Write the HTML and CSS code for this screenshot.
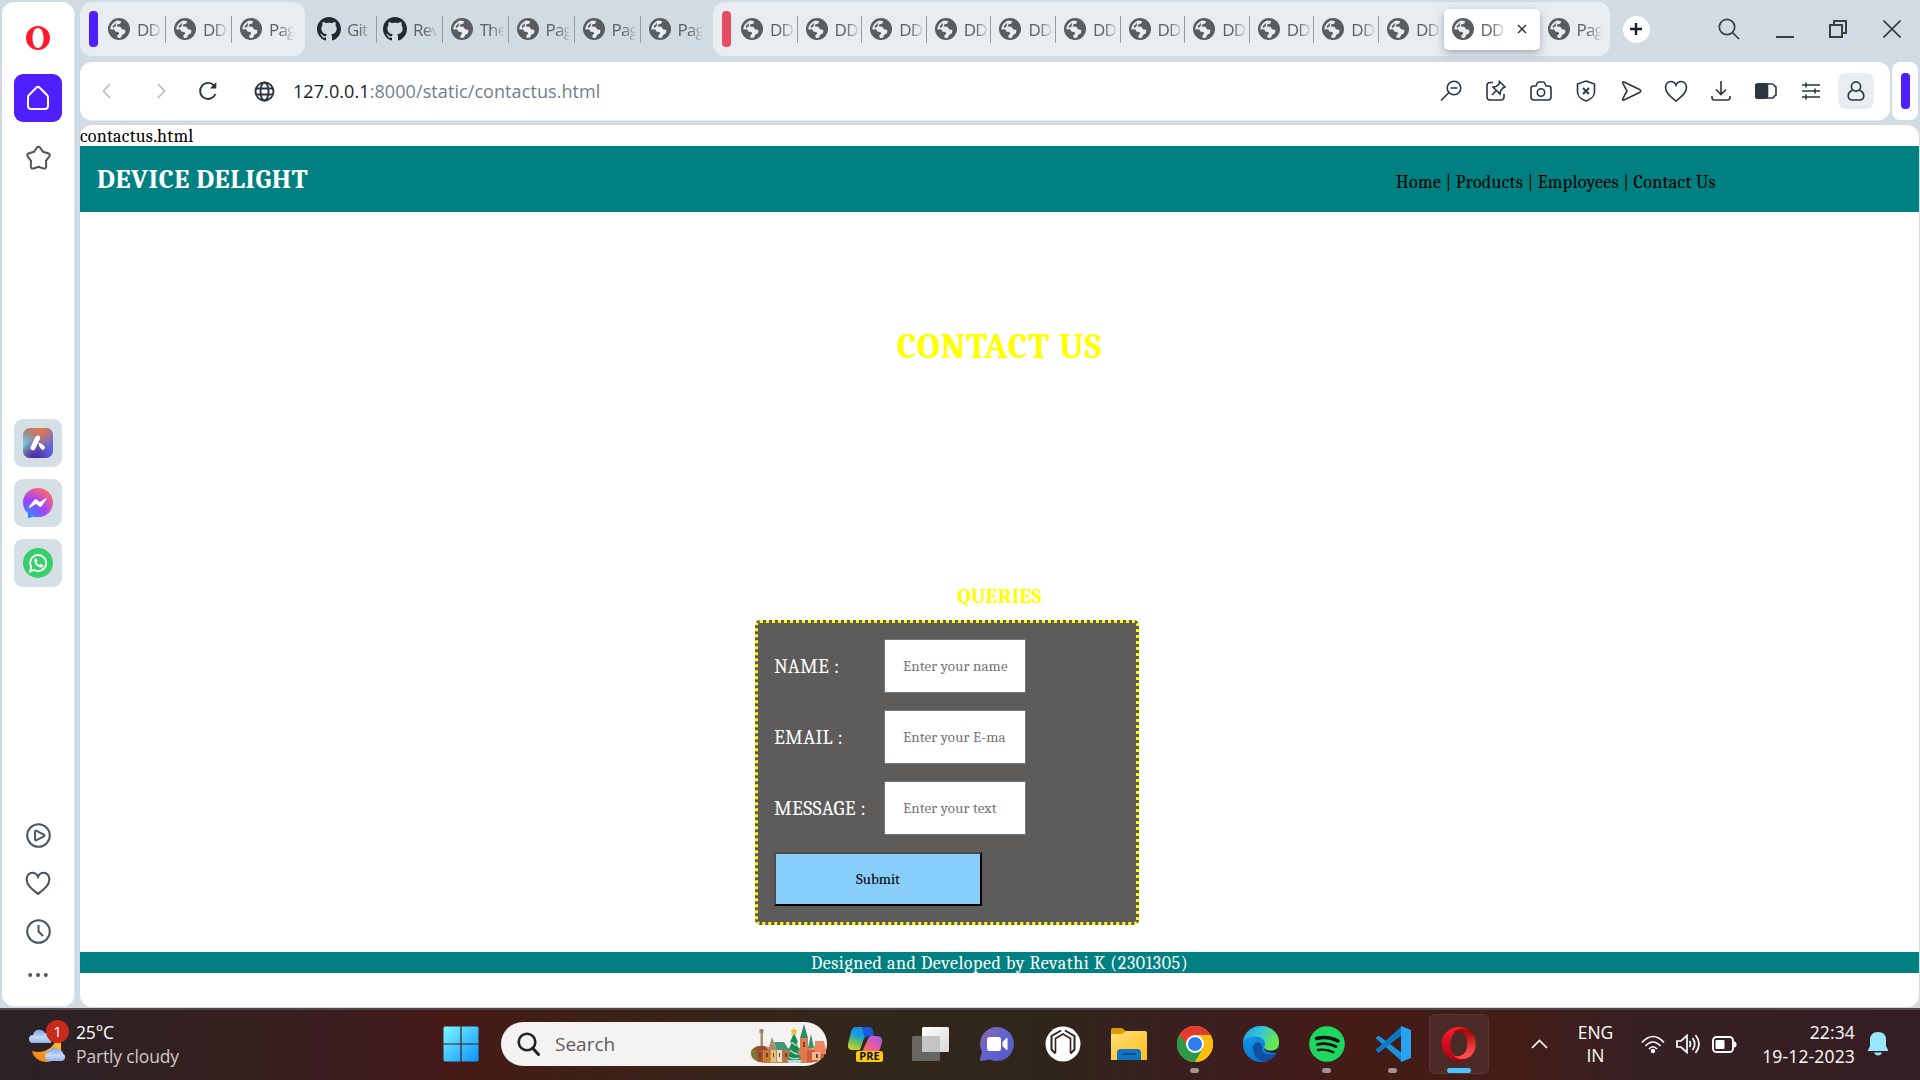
FILE: index.html
```html
<!DOCTYPE html>
<html lang="en">
<head>
<meta charset="utf-8">
<title>DD</title>
<link rel="stylesheet" href="styles.css">
</head>
<body>
<svg class="defs" width="0" height="0">
  <defs>
    <symbol id="earth" viewBox="0 0 22 22"><circle cx="11" cy="11" r="11" fill="#5a5c5e"/><path d="M2.300 11.500C2.500 7.500 5 4 9.500 2.600l3.700.6-1 2.600-2.800.4-.6 2.300 3.600.2 1.600 2.600 3.400.6-.4 3.300-2.700 1.600-1.400 3-3.100.2-.6-2.600 2-1.600-.8-1.700-2.700-.4-1.700-2.400z" fill="#e8edf1"/><path d="M4.600 8.200l3.600-3.500-.6 3.600-2.400 1.600z" fill="#5a5c5e"/></symbol>
    <symbol id="github" viewBox="0 0 16 16"><path fill="#24292f" d="M8 0C3.580 0 0 3.580 0 8c0 3.540 2.290 6.530 5.470 7.590.4.070.55-.17.55-.38 0-.19-.01-.82-.01-1.490-2.010.37-2.530-.49-2.690-.94-.09-.23-.48-.94-.82-1.130-.28-.15-.68-.52-.01-.53.63-.01 1.080.58 1.230.82.72 1.210 1.870.87 2.330.66.070-.52.28-.87.51-1.070-1.780-.2-3.640-.89-3.640-3.950 0-.87.31-1.590.82-2.150-.08-.2-.36-1.020.08-2.120 0 0 .67-.21 2.200.82.64-.18 1.320-.27 2-.27s1.360.09 2 .27c1.530-1.040 2.200-.82 2.200-.82.44 1.100.16 1.920.08 2.120.51.56.82 1.270.82 2.150 0 3.070-1.870 3.750-3.650 3.950.29.25.54.73.54 1.480 0 1.070-.01 1.930-.01 2.200 0 .21.15.46.55.38A8.010 8.010 0 0 0 16 8c0-4.420-3.580-8-8-8z"/></symbol>
    <symbol id="heart" viewBox="0 0 24 24"><path d="M12 22C7.500 18.500 1.500 14.500 1.500 8.500c0-3.300 2.300-6 5.300-6 2.300 0 4.200 1.300 5.200 3.700 1-2.400 2.900-3.700 5.200-3.700 3 0 5.300 2.700 5.300 6 0 6-6 10-10.500 13.500z"/></symbol>
    <linearGradient id="gWin" x1="0" y1="0" x2="1" y2="1"><stop offset="0" stop-color="#7df7ff"/><stop offset="1" stop-color="#0893ff"/></linearGradient>
    <linearGradient id="gAria" x1="0" y1="0" x2="1" y2="1"><stop offset="0" stop-color="#b47c70"/><stop offset=".35" stop-color="#8b7598"/><stop offset="1" stop-color="#5060ff"/></linearGradient>
    <radialGradient id="gAria2" cx=".6" cy="0" r=".6"><stop offset="0" stop-color="#e9794a"/><stop offset="1" stop-color="#e9794a" stop-opacity="0"/></radialGradient>
    <radialGradient id="gAria3" cx="0" cy=".55" r=".5"><stop offset="0" stop-color="#79d5e2"/><stop offset="1" stop-color="#79d5e2" stop-opacity="0"/></radialGradient>
    <radialGradient id="gAria4" cx=".4" cy="1" r=".6"><stop offset="0" stop-color="#46279b"/><stop offset="1" stop-color="#46279b" stop-opacity="0"/></radialGradient>
    <radialGradient id="gMsg" cx=".15" cy="1" r="1.100"><stop offset="0" stop-color="#1898ff"/><stop offset=".55" stop-color="#a040ff"/><stop offset="1" stop-color="#ff6870"/></radialGradient>
    <linearGradient id="gCop1" x1="0" y1="1" x2=".3" y2="0"><stop offset="0" stop-color="#f2d21c"/><stop offset=".4" stop-color="#6dc05a"/><stop offset=".7" stop-color="#189edb"/><stop offset="1" stop-color="#1b8fe6"/></linearGradient>
    <linearGradient id="gCop2" x1="1" y1="0" x2="0" y2="1"><stop offset="0" stop-color="#9a5cf0"/><stop offset=".55" stop-color="#e65aa0"/><stop offset="1" stop-color="#ff7845"/></linearGradient>
    <linearGradient id="gChat" x1="0" y1="0" x2="1" y2="1"><stop offset="0" stop-color="#9067a8"/><stop offset=".5" stop-color="#5f63cf"/><stop offset="1" stop-color="#5458c0"/></linearGradient>
    <linearGradient id="gFold" x1="0" y1="0" x2="1" y2="1"><stop offset="0" stop-color="#ffdf72"/><stop offset="1" stop-color="#ffbf25"/></linearGradient>
    <linearGradient id="gEdge1" x1="0" y1="0" x2="1" y2=".4"><stop offset="0" stop-color="#1b9de2"/><stop offset=".5" stop-color="#36c5d8"/><stop offset="1" stop-color="#66eb4c"/></linearGradient>
    <linearGradient id="gEdge2" x1="0" y1="0" x2=".4" y2="1"><stop offset="0" stop-color="#1ba0e6"/><stop offset="1" stop-color="#0874d4"/></linearGradient>
    <linearGradient id="gOp1" x1="0" y1="0" x2="0" y2="1"><stop offset="0" stop-color="#ff1b2d"/><stop offset="1" stop-color="#a70014"/></linearGradient>
    <linearGradient id="gOp2" x1="0" y1="0" x2="0" y2="1"><stop offset="0" stop-color="#9c0000"/><stop offset=".8" stop-color="#ff4b4b"/></linearGradient>
    <linearGradient id="gCloud" x1="0" y1="0" x2="0" y2="1"><stop offset="0" stop-color="#7da5e6"/><stop offset=".6" stop-color="#c5d9f8"/><stop offset="1" stop-color="#8fb0ea"/></linearGradient>
    <linearGradient id="gMoon" x1="0" y1="1" x2="1" y2="0"><stop offset="0" stop-color="#ee7a18"/><stop offset="1" stop-color="#ffc12e"/></linearGradient>
    <linearGradient id="gTv" x1="0" y1="0" x2="1" y2="1"><stop offset="0" stop-color="#fff"/><stop offset="1" stop-color="#d8d8d8"/></linearGradient>
  </defs>
</svg>

<div class="browser">
  <aside class="sidebar">
    <svg class="side-logo" viewBox="0 0 24 24"><path fill="#ff1b2d" fill-rule="evenodd" d="M12 0a12 12 0 1 0 0 24 12 12 0 1 0 0-24zM12 2c3.300 0 5.500 4 5.500 10s-2.200 10-5.500 10-5.500-4-5.500-10S8.700 2 12 2z"/></svg>
    <div class="side-home"><svg width="24" height="26" viewBox="0 0 24 26" fill="none" stroke="#fff" stroke-width="2" stroke-linejoin="round"><path d="M2 12.500q0-1.500 1-2.500l7.500-7.500q1.500-1.300 3 0L21 10q1 1 1 2.500V21q0 3-3 3H5q-3 0-3-3z"/></svg></div>
    <svg class="side-star line" width="27" height="27" viewBox="0 0 27 27"><path d="M11.700 2.800q1.800-2.200 3.600 0l2.700 4 5 1.500q2.800 1 1.200 3.300l-3.200 4.200.2 5.500q0 2.800-2.700 2.200l-5-1.700-5 1.700q-2.700.6-2.700-2.200l.2-5.500-3.200-4.200Q1.200 9.300 4 8.300l5-1.500z"/></svg>
    <div class="side-apps">
      <div class="side-app"><svg width="30" height="30" viewBox="0 0 30 30"><rect width="30" height="30" rx="7" fill="url(#gAria)"/><rect width="30" height="30" rx="7" fill="url(#gAria2)"/><rect width="30" height="30" rx="7" fill="url(#gAria3)"/><rect width="30" height="30" rx="7" fill="url(#gAria4)"/><path d="M14.600 10L10 19.700" stroke="#fff" stroke-width="5" stroke-linecap="round"/><path d="M15.500 14.500q5 1 6.800 5.500l-2.600 2.200q-4-2.700-4.200-7.700z" fill="#fff"/></svg></div>
      <div class="side-app"><svg width="30" height="30" viewBox="0 0 30 30"><path d="M15 0C6.500 0 0 6.200 0 14.500c0 4.400 1.800 8 4.800 10.600L5 29.500q.3 1 1.500.4l3.300-1.500c1.600.5 3.300.7 5.200.7 8.500 0 15-6.300 15-14.600S23.500 0 15 0z" fill="url(#gMsg)"/><path d="M6 18.800l5.200-7q1-1.200 2.400-.2l3.300 2.500 6-3.800q1.300-.3.700.8l-4.800 7q-1 1.400-2.600.5L13 16l-6 3.700q-1.400.3-1-.9z" fill="#fff"/></svg></div>
      <div class="side-app"><svg width="30" height="30" viewBox="0 0 30 30"><circle cx="15" cy="15" r="15" fill="#35cf6b"/><path d="M7 23.500l1.200-4.500a8 8 0 1 1 3 3z" fill="none" stroke="#fff" stroke-width="1.800"/><path d="M11.500 11c1-1.200 2-.8 2.300 0l.7 1.800-1 1.400c.8 1.500 1.800 2.300 3.200 2.900l1.300-1.300 2.200 1.100c.5.500-.2 2-1.600 2.500-3.700.8-8.300-4-7.100-8.400z" fill="#fff"/></svg></div>
    </div>
    <div class="side-bottom line">
      <svg width="25" height="25" viewBox="0 0 25 25"><circle cx="12.500" cy="12.500" r="11.300"/><path d="M9 8.800q0-1.500 1.500-1l7.300 3.800q1.300.9 0 1.800l-7.300 3.800q-1.500.5-1.500-1z"/></svg>
      <svg width="26" height="26"><use href="#heart"/></svg>
      <svg width="25" height="25" viewBox="0 0 25 25"><circle cx="12.500" cy="12.500" r="11.300"/><path d="M12.500 6v6.500l4.500 4.500"/></svg>
      <svg class="dots" width="20" height="6" viewBox="0 0 20 6"><circle cx="2.200" cy="3" r="2"/><circle cx="10" cy="3" r="2"/><circle cx="17.800" cy="3" r="2"/></svg>
    </div>
  </aside>

  <div class="main">
    <div class="tabstrip">
      <div class="group g1"><i class="pill violet"></i>
        <div class="tab"><svg><use href="#earth"/></svg><span>DD</span></div>
        <div class="tab"><svg><use href="#earth"/></svg><span>DD</span></div>
        <div class="tab last"><svg><use href="#earth"/></svg><span>Pag</span></div>
      </div>
      <div class="group loose">
        <div class="tab gh"><svg><use href="#github"/></svg><span>Git</span></div>
        <div class="tab gh"><svg><use href="#github"/></svg><span>Rev</span></div>
        <div class="tab"><svg><use href="#earth"/></svg><span>The</span></div>
        <div class="tab"><svg><use href="#earth"/></svg><span>Pag</span></div>
        <div class="tab"><svg><use href="#earth"/></svg><span>Pag</span></div>
        <div class="tab last"><svg><use href="#earth"/></svg><span>Pag</span></div>
      </div>
      <div class="group g2"><i class="pill red"></i>
        <div class="tab"><svg><use href="#earth"/></svg><span>DD</span></div>
        <div class="tab"><svg><use href="#earth"/></svg><span>DD</span></div>
        <div class="tab"><svg><use href="#earth"/></svg><span>DD</span></div>
        <div class="tab"><svg><use href="#earth"/></svg><span>DD</span></div>
        <div class="tab"><svg><use href="#earth"/></svg><span>DD</span></div>
        <div class="tab"><svg><use href="#earth"/></svg><span>DD</span></div>
        <div class="tab"><svg><use href="#earth"/></svg><span>DD</span></div>
        <div class="tab"><svg><use href="#earth"/></svg><span>DD</span></div>
        <div class="tab"><svg><use href="#earth"/></svg><span>DD</span></div>
        <div class="tab"><svg><use href="#earth"/></svg><span>DD</span></div>
        <div class="tab last"><svg><use href="#earth"/></svg><span>DD</span></div>
        <div class="tab active"><svg><use href="#earth"/></svg><span>DD</span><svg class="x" viewBox="0 0 10 10"><path d="M1 1l8 8M9 1L1 9" stroke="#2b3640" stroke-width="1.500"/></svg></div>
        <div class="tab last"><svg><use href="#earth"/></svg><span>Pag</span></div>
      </div>
      <div class="newtab"><svg width="12" height="12" viewBox="0 0 12 12"><path d="M6 0v12M0 6h12" stroke="#17202a" stroke-width="2.400"/></svg></div>
      <div class="winctl">
        <svg width="22" height="22" viewBox="0 0 22 22"><circle cx="9" cy="9" r="7.700"/><path d="M14.500 14.500l6.500 6.500"/></svg>
        <svg width="18" height="22" viewBox="0 0 18 22"><path d="M0 19h18" stroke-width="2"/></svg>
        <svg width="18" height="18" viewBox="0 0 18 18" stroke-width="2"><path d="M1 5h12v12H1zM5 5V1h12v12h-4"/></svg>
        <svg width="18" height="18" viewBox="0 0 18 18"><path d="M.5.5l17 17M17.500.5l-17 17"/></svg>
      </div>
    </div>

    <div class="toolrow">
      <div class="toolbar">
        <div class="navbtns">
          <svg class="dim" width="9" height="16" viewBox="0 0 9 16"><path d="M8 1L1.500 8 8 15"/></svg>
          <svg class="dim" width="9" height="16" viewBox="0 0 9 16"><path d="M1 1l6.500 7L1 15"/></svg>
          <svg width="20" height="20" viewBox="0 0 20 20"><path d="M17.500 13A8 8 0 1 1 16 4.500" stroke-width="1.900"/><path d="M18.300 1v6.500h-6.500z" fill="#2b3640" stroke="none"/></svg>
          <svg width="21" height="21" viewBox="0 0 21 21" stroke-width="1.900"><circle cx="10.500" cy="10.500" r="9"/><ellipse cx="10.500" cy="10.500" rx="4" ry="9"/><path d="M2 7.500h17M2 13.500h17"/></svg>
        </div>
        <div class="url"><b>127.0.0.1</b>:8000/static/contactus.html</div>
        <div class="tools">
          <i><svg width="22" height="22" viewBox="0 0 22 22"><circle cx="14" cy="8" r="6.800"/><path d="M9 12.500L1 20.500M10.500 8h7"/></svg></i>
          <i><svg width="22" height="22" viewBox="0 0 22 22"><path d="M8 2.500H5q-3 0-3 3V17q0 3 3 3h11q3 0 3-3v-3"/><path d="M7 15l4-4M14.500 1.500l5.500 5.500-2 1-2.500 3-.5 3-7-7 3-.5 3-2.500z"/></svg></i>
          <i><svg width="22" height="22" viewBox="0 0 22 22"><path d="M1 8.500q0-2.500 2.500-2.500H6l1-2.500Q7.500 2 9 2h4q1.500 0 2 1.500L16 6h2.500Q21 6 21 8.500V17q0 3-3 3H4q-3 0-3-3z"/><circle cx="11" cy="12.500" r="3.700"/></svg></i>
          <i><svg width="22" height="22" viewBox="0 0 22 22"><path d="M11 1l8.500 3v8c0 4-4 7.500-8.500 9-4.500-1.500-8.500-5-8.500-9V4z"/><path d="M8 8l6 6M14 8l-6 6" stroke-width="1.900"/></svg></i>
          <i><svg width="22" height="22" viewBox="0 0 22 22"><path d="M4 2l16 7.800q1.500 1.200 0 2.400L4 20q-1.800.5-1.200-1.300L7 11 2.800 3.300Q2.300 1.500 4 2z"/></svg></i>
          <i><svg width="24" height="24"><use href="#heart"/></svg></i>
          <i><svg width="22" height="22" viewBox="0 0 22 22"><path d="M11 1v13M6 9.500l5 5 5-5M2 16v1.500Q2 20 4.500 20h13q2.500 0 2.500-2.500V16"/></svg></i>
          <i><svg width="22" height="16" viewBox="0 0 22 16"><path d="M11 1h6q2 0 2.500 2l1.500 1v8l-1.500 1q-.5 2-2.500 2h-6"/><rect x=".5" y=".8" width="12" height="14.400" rx="2.500" fill="#2b3640"/></svg></i>
          <i><svg width="20" height="18" viewBox="0 0 20 18"><path d="M1 3h18M1 9h18M1 15h18M5 .5v5M14 6.500v5M5 12.500v5"/></svg></i>
          <i class="profile"><svg width="18" height="20" viewBox="0 0 18 20"><circle cx="9" cy="5.500" r="4.600"/><path d="M5.500 9C2.500 10.500 1 13 1.200 15.500 1.500 18 3 19 5.500 19h7c2.500 0 4-1 4.300-3.500.2-2.500-1.300-5-4.300-6.500"/></svg></i>
        </div>
      </div>
      <div class="sidepanel"><i class="pill violet"></i></div>
    </div>

    <div class="page">
      <div class="crumb">contactus.html</div>
      <header class="site-head">
        <h2>DEVICE DELIGHT</h2>
        <nav>Home | Products | Employees | Contact Us</nav>
      </header>
      <h1>CONTACT US</h1>
      <h3>QUERIES</h3>
      <div class="form">
        <label>NAME :</label><div class="field"><span>Enter your name</span></div>
        <label>EMAIL :</label><div class="field"><span>Enter your E-ma</span></div>
        <label>MESSAGE :</label><div class="field"><span>Enter your text</span></div>
        <button>Submit</button>
      </div>
      <footer>Designed and Developed by Revathi K (2301305)</footer>
    </div>
  </div>
</div>

<div class="taskbar">
  <div class="weather">
    <div class="wicon">
      <svg width="40" height="44" viewBox="0 0 40 44"><path d="M4 31c9 3 19-1 23-9h6v9c-2 13-25 16-29 0z" fill="url(#gMoon)"/><path d="M5 23a4 4 0 0 1 0-8 6.500 6.500 0 0 1 12-2q5 0 6 4v6z" fill="url(#gCloud)"/><path d="M20 41a5 5 0 0 1 1-9.500 6 6 0 0 1 10-2q4 1 4 4a4 4 0 0 1-1 7.500z" fill="url(#gCloud)"/></svg>
      <span class="badge">1</span>
    </div>
    <div class="wtext"><span>25°C</span><span class="soft">Partly cloudy</span></div>
  </div>
  <div class="slot start"><svg width="36" height="36" viewBox="0 0 36 36"><path fill="url(#gWin)" d="M2 .5h15.400v16.900H.5V2Q.5.500 2 .5zM18.600.5H34q1.500 0 1.500 1.500v15.400H18.600zM.5 18.600h16.900v16.900H2q-1.500 0-1.500-1.500zM18.600 18.600h16.900V34q0 1.500-1.500 1.500H18.600z"/></svg></div>
  <div class="search">
    <svg width="23" height="24" viewBox="0 0 23 24" fill="none" stroke="#222" stroke-width="2.600"><circle cx="10" cy="10" r="8.300"/><path d="M15.500 16l6 6.500" stroke-linecap="round" stroke-width="3"/></svg>
    <span>Search</span>
    <svg class="town" width="76" height="40" viewBox="0 0 76 40">
      <path d="M1 29q0-4 4-6l8-1 10 2h52q0 6-5 10l-8 5H14Q1 37 1 29z" fill="#c98a58"/>
      <path d="M1 29q0-4 5-6l4 2v13Q1 36 1 29z" fill="#7a7a35"/>
      <path d="M10.500 8h2.500v17h-2.500zM9.500 5h4v4h-4z" fill="#a68b68"/>
      <path d="M6 26h7v12H8z" fill="#a24c30"/><path d="M14 26h6v13h-6z" fill="#c9762f"/><path d="M21 26h5v12h-5z" fill="#e2c36c"/><path d="M27 25h5v13h-5z" fill="#e3dccf"/><path d="M32 25h7v13h-7z" fill="#bd7443"/>
      <path d="M4 26l3-4h8l3 4z" fill="#9d4c33"/><path d="M24 18h10l5 8H27z" fill="#3f967c"/><path d="M18 26l4-13 5 13z" fill="#a88d70"/>
      <path d="M50 14h8v24h-8z" fill="#df7950"/><path d="M54 0l4 14h-8z" fill="#338a66"/><path d="M61 22h6v16h-6z" fill="#e89a70"/><path d="M61 10l3 14h-6z" fill="#2e9a72"/>
      <path d="M57 26h17v7l-8 5h-9z" fill="#cf5d38"/><path d="M65 17h9l2 9v4H65z" fill="#ef8560"/><path d="M62 28h9l-1 8h-8z" fill="#f7b590"/>
      <path d="M9 29h2v4H9zM16 29h2v4h-2zM23 29h1v4h-1zM29 29h1v4h-1zM35 29h2v4h-2zM53 18h2v5h-2zM66 30h2v4h-2z" fill="#6b4636"/>
      <path d="M44 9l4 9-1.500 1 3 7-2 1 3.500 8q-7 3-14 0l3.500-8-2-1 3-7-1.500-1z" fill="#1e8a4d"/><path d="M37 36h15l-2 3H39z" fill="#bcd8e4"/>
      <path d="M41.500 18q3 3 6 4M40 26q4 4 8.500 4M38.500 33q5 3 11 1" fill="none" stroke="#b9e0d8" stroke-width="1.200"/>
      <path d="M44 3l1 3h3l-2 2 1 3-3-2-3 2 1-3-2-2h3z" fill="#f1bd28"/>
    </svg>
  </div>
  <div class="apps">
    <div class="slot"><svg width="36" height="38" viewBox="0 0 36 38"><path d="M9 2h13l-6 14-3 9H6q-6 0-5-6L4 7q1-5 5-5z" fill="url(#gCop1)"/><path d="M15 2h7q3 0 4 4l1 5h-5q-3 0-4 3z" fill="#1a5ce0"/><path d="M24 11h6q6 0 5 6l-2 7q-1 3-5 3H15l6-13q1-3 3-3z" fill="url(#gCop2)"/><rect x="9" y="26" width="27" height="11" rx="2.500" fill="#ffc90e"/><text x="22.500" y="35.300" class="pre">PRE</text></svg></div>
    <div class="slot"><svg width="37" height="36" viewBox="0 0 37 36"><rect x="10" y="1" width="27" height="25" rx="1.500" fill="url(#gTv)"/><rect x="0" y="10" width="28" height="25" rx="1.500" fill="#777" fill-opacity=".78"/><path d="M10 10h18v16H10z" fill="#c4c4c4"/></svg></div>
    <div class="slot"><svg width="36" height="36" viewBox="0 0 36 36"><path d="M18 1a17 17 0 1 1-7 32.500L2 35q-2 0-1-2l2-7A17 17 0 0 1 18 1z" fill="url(#gChat)"/><rect x="8" y="11" width="14" height="14" rx="2.500" fill="#fff"/><path d="M23.500 16l4-4h1v12h-1l-4-4z" fill="#fff"/></svg></div>
    <div class="slot"><svg width="36" height="36" viewBox="0 0 36 36"><circle cx="18" cy="18" r="17.500" fill="#fff"/><g fill="none" stroke="#32231d" stroke-width="2"><path d="M16 4.500L6.500 10v13.500l4 4"/><path d="M20 4.500l9.500 5.500v13.500l-4 4"/><path d="M10.500 27V12.500L18 8l7.500 4.500V27" stroke-width="1.600"/></g><path d="M11 34v-6l4 2 3-3.500 3 3.500 4-2v6z" fill="#fff"/></svg></div>
    <div class="slot"><svg width="36" height="36" viewBox="0 0 36 36"><path d="M0 4q0-2 2-2h9l4 3v6H0z" fill="#dd9a07"/><path d="M0 8h11l4-3h19q2 0 2 2v27H0z" fill="url(#gFold)"/><path d="M6 34v-7q0-4 4-4h16q4 0 4 4v7z" fill="#1272c4"/><path d="M11 28h14" stroke="#0a4d8c" stroke-width="2"/></svg></div>
    <div class="slot run"><svg width="36" height="36" viewBox="0 0 36 36"><circle cx="18" cy="18" r="18" fill="#fbbc12"/><path d="M18 18L2.400 9A18 18 0 0 0 18 36l9-13.500z" fill="#2a9a48"/><path d="M18 18H9.500L2.400 9a18 18 0 0 1 31.200 0H18z" fill="#e33b2e"/><path d="M18 9h15.600A18 18 0 0 1 18 36l7.800-13.500z" fill="#fbbc12"/><circle cx="18" cy="18" r="9" fill="#fff"/><circle cx="18" cy="18" r="7" fill="#2f7cf0"/></svg></div>
    <div class="slot"><svg width="36" height="36" viewBox="0 0 36 36"><circle cx="18" cy="18" r="18" fill="url(#gEdge2)"/><path d="M10 22c0 8 6 14 12 13.500 5-1 9-4 11-8-8 3-15 0-14-6 0-3-1-5-4-5s-5 2-5 5.500z" fill="#104f9e"/><path d="M0 16C1 6 9 0 18 0c10 0 18 7 18 16 0 6-4 9-9 9-4 0-6-1.500-6-3 0-1 1-1.500 1-4 0-4-4-7.500-10-7.500C7 10.500 2 12 0 16z" fill="url(#gEdge1)"/><path d="M21 22c0 3 5 5 13 5l2-5-4 2q-7 2-11-2z" fill="#3a201b"/></svg></div>
    <div class="slot run"><svg width="36" height="36" viewBox="0 0 36 36"><circle cx="18" cy="18" r="17.800" fill="#1ed760"/><g fill="none" stroke="#0a0f0b" stroke-linecap="round"><path d="M7.500 12.500q11-3 21.500 2.500" stroke-width="3.500"/><path d="M8.500 18.500q9-2.500 18.500 2" stroke-width="2.800"/><path d="M9 24q8-1.500 15.500 2.300" stroke-width="2.300"/></g></svg></div>
    <div class="slot run"><svg width="36" height="36" viewBox="0 0 36 36"><path d="M.5 12l3-2.500L27 27v8.500z" fill="#1b93dc"/><path d="M.5 24l3 3L27 9V0z" fill="#0b78c4"/><path d="M26 0l10 4v28l-10 4z" fill="#27a3f2"/></svg></div>
    <div class="slot current"><svg width="35" height="36" viewBox="0 0 36 36"><path fill="url(#gOp1)" fill-rule="evenodd" d="M18 .5a17.500 17.500 0 1 0 0 35A17.500 17.500 0 0 0 30 31c-10 6-20.500-1-20.500-13S20 -1 30 5A17.500 17.500 0 0 0 18 .5z"/><path fill="url(#gOp2)" d="M12 6.800c7-8 16-3 18-1.800a17.400 17.400 0 0 1 0 26c-3 2-11 5-18-1.800 8 4 15-1.200 15-11.200S20 2.800 12 6.800z"/></svg></div>
  </div>
  <div class="tray">
    <svg class="chev" width="17" height="10" viewBox="0 0 17 10"><path d="M1 9l7.500-7.500L16 9"/></svg>
    <div class="lang"><span>ENG</span><span>IN</span></div>
    <div class="status">
      <svg width="24" height="19" viewBox="0 0 24 19"><path d="M1 7.500Q12-4.500 23 7.500M4.500 11Q12 3 19.500 11M8 14q4-4.500 8 0" /><circle cx="12" cy="16" r="2.200" fill="#fff" stroke="none"/></svg>
      <svg width="25" height="20" viewBox="0 0 25 20"><path d="M1 7h4l6-5.500v17L5 13H1zM13.500 7q2 3 0 6M16.500 4q4.500 6 0 12M19.500 1q7 9 0 18"/></svg>
      <svg width="25" height="17" viewBox="0 0 25 17"><rect x="1" y="1" width="20" height="15" rx="3.500" stroke-width="1.900"/><rect x="3.500" y="4" width="9" height="9" rx="1" fill="#fff" stroke="none"/><path d="M22 5.500q2.500 0 2.500 3t-2.500 3z" fill="#fff" stroke="none"/></svg>
    </div>
    <div class="clock"><span>22:34</span><span>19-12-2023</span></div>
    <svg class="bell" width="20" height="24" viewBox="0 0 20 24"><path fill="#97e7ff" stroke="none" d="M10 0q8 0 8 8v6l2 4v1H0v-1l2-4V8q0-8 8-8zM6 20.500h8q-1 3-4 3t-4-3z"/></svg>
  </div>
</div>
</body>
</html>
```
FILE: styles.css
```css
* { box-sizing: border-box; }
body { margin: 0; width: 1920px; height: 1080px; overflow: hidden; display: flex; flex-direction: column; font-family: "Open Sans", "Noto Sans", sans-serif; }
.defs { position: absolute; }
svg { display: block; flex: none; }

.browser { flex: 0 0 1008px; display: flex; padding-left: 2px; background: #d1dbe4; }
.sidebar { width: 72px; height: 1004px; margin-top: 2px; background: #fff; border-radius: 12px; display: flex; flex-direction: column; align-items: center; box-shadow: 1px 1px 0 #e4eaef; }
.side-logo { width: 24px; height: 24px; margin-top: 24px; }
.side-home { width: 48px; height: 48px; margin-top: 24px; border-radius: 9px; background: #4f1fff; display: grid; place-items: center; }
.line { fill: none; stroke: #4b5660; stroke-width: 2; }
.side-star { margin-top: 23px; }
.side-apps { margin-top: 247px; display: flex; flex-direction: column; gap: 12px; }
.side-app { width: 48px; height: 48px; border-radius: 9px; background: #d5dfe6; display: grid; place-items: center; }
.side-bottom { margin-top: auto; margin-bottom: 28px; display: flex; flex-direction: column; align-items: center; gap: 22.500px; }
.side-bottom .dots { fill: #4b5660; stroke: none; margin-top: 6px; }

.main { flex: 1; margin-left: 6px; display: flex; flex-direction: column; min-width: 0; }
.tabstrip { height: 54px; margin-top: 2px; display: flex; align-items: center; }
.group { height: 54px; display: flex; align-items: center; flex: none; }
.g1, .g2 { background: #e8edf1; border-radius: 12px; padding-left: 9px; }
.g1 { width: 225px; }
.loose { margin-left: 5.500px; width: 396px; }
.g2 { margin-left: 6.500px; width: 896.500px; }
.pill { width: 9px; height: 36px; border-radius: 4px; margin-right: 2px; flex: none; }
.violet { background: #4f1fff; }
.red { background: #e44c60; }
.tab { width: 66px; height: 27px; flex: none; display: flex; align-items: center; padding-left: 8px; border-right: 1.500px solid #969ca1; }
.g2 .tab { width: 64.600px; }
.tab.last { border-right-color: transparent; }
.tab svg { width: 22px; height: 22px; }
.tab.gh { padding-left: 6.500px; }
.tab.gh svg { width: 24px; height: 24px; }
.tab span { width: 24px; margin-left: 7px; overflow: hidden; white-space: nowrap; font-size: 17px; line-height: 27px; letter-spacing: -.8px; color: #5c6164; mask-image: linear-gradient(90deg, #000 45%, transparent 105%); }
.tab.gh span { margin-left: 6px; }
.g2 .tab.active { width: 96px; height: 41px; border: 0; border-radius: 5px; background: #fff; box-shadow: 0 3px 8px rgba(60,70,80,.4); }
.tab.active .x { width: 10px; height: 10px; margin-left: 12px; }
.newtab { width: 27px; height: 27px; margin-left: 13px; border-radius: 50%; background: #fff; display: grid; place-items: center; }
.winctl { margin: 0 19.500px 0 auto; display: flex; align-items: center; gap: 35.500px; fill: none; stroke: #3a3f44; stroke-width: 1.700; }

.toolrow { margin-top: 6px; display: flex; gap: 2px; }
.toolbar { width: 1810px; height: 58px; background: #fff; border-radius: 12px; display: flex; align-items: center; box-shadow: 0 1px 0 #e6ebf0; }
.navbtns { display: flex; align-items: center; padding-left: 22px; fill: none; stroke: #2b3640; stroke-width: 1.700; }
.navbtns svg + svg { margin-left: 46px; }
.navbtns svg:nth-child(3) { margin-left: 32px; }
.navbtns svg:nth-child(4) { margin-left: 36px; }
.dim { stroke: #b9bdc1; }
.url { margin-left: 18px; font-size: 18px; line-height: 26px; letter-spacing: .08px; color: #6f7f8d; white-space: nowrap; }
.url b { font-weight: 400; color: #17202a; }
.tools { margin-left: auto; padding-right: 16px; display: flex; fill: none; stroke: #2b3640; stroke-width: 1.600; }
.tools i { width: 45px; height: 36px; display: grid; place-items: center; }
.tools .profile { width: 36px; margin-left: 5px; border-radius: 8px; background: #e8edf1; }
.sidepanel { width: 26px; height: 58px; background: #fff; border-radius: 8px; display: grid; place-items: center; }
.sidepanel .pill { margin: 0; }

.page { margin-top: 5px; width: 1839px; height: 882px; background: #fff; border-radius: 12px; overflow: hidden; font-family: Cambria, Caladea, "Liberation Serif", serif; display: flex; flex-direction: column; }
.crumb { height: 21px; font-size: 18px; line-height: 24px; letter-spacing: .25px; color: #000; }
.site-head { height: 66px; flex: none; background: #008080; display: flex; justify-content: space-between; align-items: center; padding: 2px 203px 0 17px; }
h1, h2, h3 { margin: 0; font-weight: 700; text-align: center; white-space: nowrap; }
.site-head h2 { font-size: 27px; line-height: 32px; letter-spacing: .5px; color: #fff; }
.site-head nav { padding-top: 6px; font-size: 18px; line-height: 22px; letter-spacing: .33px; color: #000; white-space: nowrap; }
h1 { margin-top: 113px; font-size: 36px; line-height: 44px; letter-spacing: .7px; color: #ff0; }
h3 { margin-top: 215px; font-size: 21px; line-height: 24px; letter-spacing: .3px; color: #ff0; }
.form { width: 384px; height: 305px; flex: none; margin: 12px 0 0 675px; padding: 16px; background: #5d5c5a; border: 3px dotted #ff0; border-radius: 5px; display: grid; grid-template-columns: 110px 142px; grid-auto-rows: 54px; row-gap: 17px; align-items: center; }
.form label { font-size: 20px; letter-spacing: .3px; color: #fff; white-space: nowrap; }
.field { height: 54px; background: #fff; border: 1px solid #767676; padding: 0 17px 0 18px; display: flex; align-items: center; }
.field span { white-space: nowrap; font-size: 15px; line-height: 20px; letter-spacing: .12px; color: #757575; }
.form button { grid-column: 1 / 3; width: 208px; height: 54px; padding: 0; border: 2px outset #000; border-color: #4c4c4c #000 #000 #4c4c4c; background: #87cefa; font: 15px Cambria, Caladea, "Liberation Serif", serif; color: #000; }
footer { margin-top: 27px; height: 21px; flex: none; background: #008080; color: #fff; text-align: center; font-size: 18px; line-height: 23px; letter-spacing: .58px; white-space: nowrap; }

.taskbar { flex: 0 0 72px; display: flex; align-items: center; padding-bottom: 2px; border-top: 2px solid #504547; color: #fff; font-size: 17.500px; background: linear-gradient(90deg, #2a2226 0, #35201f 12%, #3a1d20 17%, #451a17 23.500%, #3c2018 31%, #32271b 45%, #30251a 55%, #3a1f20 62%, #441b17 70%, #431d17 79%, #372023 85%, #341e23 100%); }
.weather { width: 428px; padding-left: 28px; display: flex; align-items: center; }
.wicon { position: relative; width: 42px; margin-top: -5px; }
.badge { position: absolute; left: 18px; top: 0; width: 23px; height: 23px; border-radius: 50%; background: #c42b1c; text-align: center; font-size: 15px; line-height: 23px; }
.wtext { margin-left: 6px; display: flex; flex-direction: column; line-height: 24px; letter-spacing: -.15px; }
.soft { color: #cfc8c8; }
.slot { position: relative; width: 66px; height: 60px; flex: none; display: grid; place-items: center; }
.search { width: 326px; height: 44px; margin-left: 7px; border-radius: 22px; background: #f4f3f2; display: flex; align-items: center; padding-left: 16px; color: #5d5d5d; font-size: 19px; }
.search span { margin-left: 15px; letter-spacing: 0; }
.town { margin-left: auto; margin-right: 1px; }
.apps { margin-left: 4.500px; display: flex; }
.pre { font: 700 11px "Open Sans", sans-serif; text-anchor: middle; fill: #111; }
.run::after, .current::after { content: ""; position: absolute; bottom: 1px; left: 28.500px; width: 9px; height: 5px; border-radius: 3px; background: #a09594; }
.current { width: 60px; margin-left: 3px; border-radius: 6px; background: #4a2927; box-shadow: inset 0 0 0 1px #573634; }
.current::after { left: 18px; width: 24px; background: #4cc2ff; }
.tray { flex: 1; display: flex; align-items: center; fill: none; stroke: #fff; stroke-width: 1.700; padding-right: 32px; }
.chev { margin-left: 42px; }
.lang { width: 50px; margin-left: 23px; display: flex; flex-direction: column; text-align: center; line-height: 23px; }
.status { margin-left: 20px; display: flex; align-items: center; gap: 11px; }
.clock { margin-left: auto; display: flex; flex-direction: column; text-align: right; line-height: 24px; letter-spacing: .15px; }
.bell { margin-left: 13px; }
```
